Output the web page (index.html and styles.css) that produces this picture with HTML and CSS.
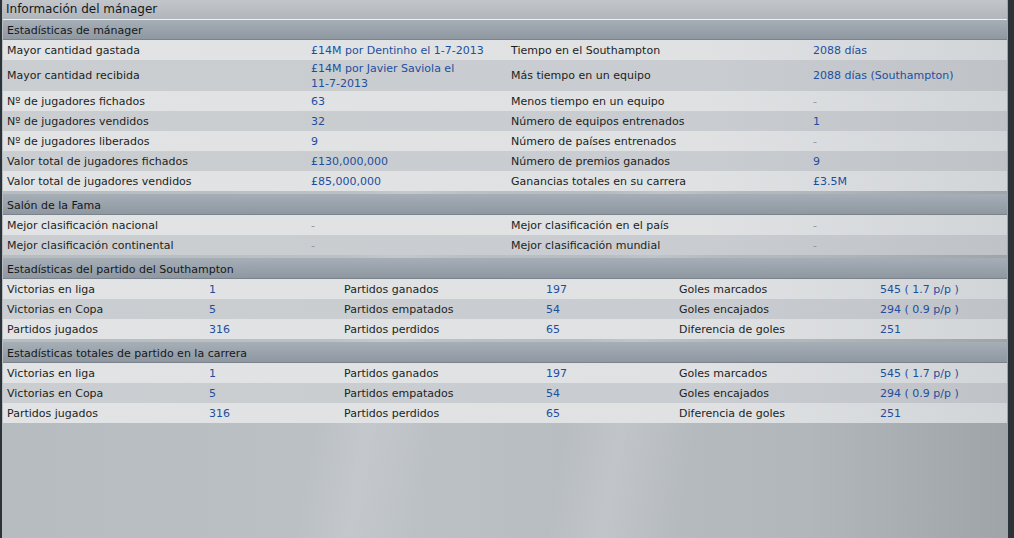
FILE: index.html
```html
<!DOCTYPE html>
<html>
<head>
    <title>Información del mánager</title>
    <link rel="stylesheet" href="styles.css">
</head>
<body>

<div class="window">
    <div class="panel">
        <div class="title">Información del mánager</div>

        <!-- Estadísticas de mánager -->
        <div class="section first">
            <div class="section-head">Estadísticas de mánager</div>
            <div class="row four">
                <span>Mayor cantidad gastada</span>
                <span class="val">£14M por Dentinho el 1-7-2013</span>
                <span>Tiempo en el Southampton</span>
                <span class="val">2088 días</span>
            </div>
            <div class="row four tall">
                <span>Mayor cantidad recibida</span>
                <span class="val wrap">£14M por Javier Saviola el<br>11-7-2013</span>
                <span>Más tiempo en un equipo</span>
                <span class="val">2088 días (Southampton)</span>
            </div>
            <div class="row four">
                <span>Nº de jugadores fichados</span>
                <span class="val">63</span>
                <span>Menos tiempo en un equipo</span>
                <span class="val none">-</span>
            </div>
            <div class="row four">
                <span>Nº de jugadores vendidos</span>
                <span class="val">32</span>
                <span>Número de equipos entrenados</span>
                <span class="val">1</span>
            </div>
            <div class="row four">
                <span>Nº de jugadores liberados</span>
                <span class="val">9</span>
                <span>Número de países entrenados</span>
                <span class="val none">-</span>
            </div>
            <div class="row four">
                <span>Valor total de jugadores fichados</span>
                <span class="val">£130,000,000</span>
                <span>Número de premios ganados</span>
                <span class="val">9</span>
            </div>
            <div class="row four">
                <span>Valor total de jugadores vendidos</span>
                <span class="val">£85,000,000</span>
                <span>Ganancias totales en su carrera</span>
                <span class="val">£3.5M</span>
            </div>
        </div>

        <!-- Salón de la Fama -->
        <div class="section">
            <div class="section-head">Salón de la Fama</div>
            <div class="row four">
                <span>Mejor clasificación nacional</span>
                <span class="val none">-</span>
                <span>Mejor clasificación en el país</span>
                <span class="val none">-</span>
            </div>
            <div class="row four">
                <span>Mejor clasificación continental</span>
                <span class="val none">-</span>
                <span>Mejor clasificación mundial</span>
                <span class="val none">-</span>
            </div>
        </div>

        <!-- Estadísticas del partido del Southampton -->
        <div class="section">
            <div class="section-head">Estadísticas del partido del Southampton</div>
            <div class="row six">
                <span>Victorias en liga</span>
                <span class="val">1</span>
                <span>Partidos ganados</span>
                <span class="val">197</span>
                <span>Goles marcados</span>
                <span class="val">545 ( 1.7 p/p )</span>
            </div>
            <div class="row six">
                <span>Victorias en Copa</span>
                <span class="val">5</span>
                <span>Partidos empatados</span>
                <span class="val">54</span>
                <span>Goles encajados</span>
                <span class="val">294 ( 0.9 p/p )</span>
            </div>
            <div class="row six">
                <span>Partidos jugados</span>
                <span class="val">316</span>
                <span>Partidos perdidos</span>
                <span class="val">65</span>
                <span>Diferencia de goles</span>
                <span class="val">251</span>
            </div>
        </div>

        <!-- Estadísticas totales de partido en la carrera -->
        <div class="section">
            <div class="section-head">Estadísticas totales de partido en la carrera</div>
            <div class="row six">
                <span>Victorias en liga</span>
                <span class="val">1</span>
                <span>Partidos ganados</span>
                <span class="val">197</span>
                <span>Goles marcados</span>
                <span class="val">545 ( 1.7 p/p )</span>
            </div>
            <div class="row six">
                <span>Victorias en Copa</span>
                <span class="val">5</span>
                <span>Partidos empatados</span>
                <span class="val">54</span>
                <span>Goles encajados</span>
                <span class="val">294 ( 0.9 p/p )</span>
            </div>
            <div class="row six">
                <span>Partidos jugados</span>
                <span class="val">316</span>
                <span>Partidos perdidos</span>
                <span class="val">65</span>
                <span>Diferencia de goles</span>
                <span class="val">251</span>
            </div>
        </div>
    </div>
</div>

</body>
</html>
```

FILE: styles.css
```css
html, body {
    margin: 0;
    height: 100%;
}
body {
    font-family: "DejaVu Sans", "Liberation Sans", sans-serif;
    font-size: 11px;
    color: #1c1f22;
    background: #2b3238;
}
.window {
    height: 538px;
    padding: 0 6px 0 2px;
    box-sizing: border-box;
}
.panel {
    height: 100%;
    background:
        linear-gradient(100deg, rgba(255,255,255,0) 35%, rgba(255,255,255,0.12) 40%, rgba(255,255,255,0) 46%, rgba(255,255,255,0) 58%, rgba(255,255,255,0.14) 63%, rgba(255,255,255,0) 70%),
        linear-gradient(90deg, #b7bcc1 0%, #bcc1c6 40%, #b2b7bc 80%, #9fa4a9 100%);
    padding: 0 1px 0 1px;
}
.title {
    height: 19px;
    line-height: 19px;
    font-size: 12px;
    padding-left: 3px;
    color: #15181b;
    background: linear-gradient(180deg, #c2c6cb, #b1b6bc);
    border-bottom: 1px solid #eef0f2;
    box-sizing: border-box;
    height: 20px;
}
.section {
    margin-bottom: 3px;
}
.section-head {
    height: 21px;
    line-height: 21px;
    padding: 1px 0 0 4px;
    color: #15181b;
    background: linear-gradient(180deg, #a6aeb6 0%, #98a1aa 60%, #8f98a1 100%);
    border-bottom: 1px solid #7b848d;
    box-sizing: border-box;
}
.first .section-head {
    height: 20px;
    line-height: 20px;
}
.row {
    display: grid;
    align-items: center;
    height: 20px;
    background: linear-gradient(90deg, #e1e3e5 0%, #dfe1e3 70%, #d2d5d8 100%);
}
.row:nth-child(odd) {
    background: linear-gradient(90deg, #cbced1 0%, #c9ccd0 70%, #bfc2c6 100%);
}
.row.tall {
    height: 31px;
}
.four {
    grid-template-columns: 304px 200px 302px 1fr;
}
.six {
    grid-template-columns: 202px 135px 202px 133px 201px 1fr;
}
.row span {
    padding-left: 4px;
    white-space: nowrap;
}
.val {
    color: #1d4f9e;
}
.val.wrap {
    line-height: 15px;
}
.val.none {
    color: #8f969d;
}
```
